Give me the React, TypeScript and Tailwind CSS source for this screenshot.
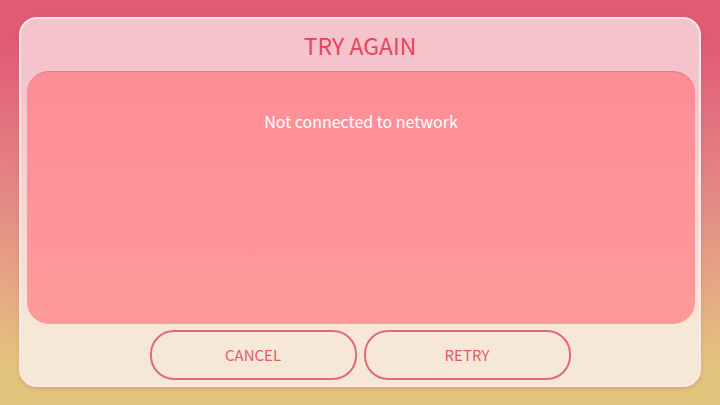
export default function App() {
  return (
    <div
      className="w-[720px] h-[405px] overflow-hidden bg-gradient-to-b from-[#e15a76] from-10% via-[#e48a86] to-[#e3c47c] to-90% pt-[17px] px-[19px]"
      style={{ fontFamily: '"Noto Sans CJK KR", "Noto Sans", sans-serif' }}
    >
      {/* dialog shell */}
      <div className="h-[370px] rounded-[18px] border-2 border-[#fbe9ea] bg-gradient-to-b from-[#f5c3cc] from-15% to-[#f6e8d6] to-85% shadow-[0_2px_4px_rgba(180,90,80,0.25)] flex flex-col">
        <div className="h-[52px] flex items-center justify-center">
          <h1 className="text-[23px] leading-none text-[#e6445f]">TRY AGAIN</h1>
        </div>

        {/* message area */}
        <div className="h-[253px] ml-[6px] mr-[4px] rounded-[22px] bg-gradient-to-b from-[#fd8d96] to-[#fd9a9a] shadow-[inset_0_1px_0_rgba(230,100,110,0.5)] flex justify-center pt-[42px]">
          <p className="text-[16px] leading-none text-white">Not connected to network</p>
        </div>

        {/* actions */}
        <div className="flex justify-center gap-[7px] mt-[6px]">
          <ActionButton label="CANCEL" />
          <ActionButton label="RETRY" />
        </div>
      </div>
    </div>
  );
}

function ActionButton({ label }: { label: string }) {
  return (
    <button className="w-[207px] h-[50px] rounded-[24px] border-2 border-[#e4677a] bg-[#f6e8d6]/60 text-[15px] text-[#e35b6c]">
      {label}
    </button>
  );
}
